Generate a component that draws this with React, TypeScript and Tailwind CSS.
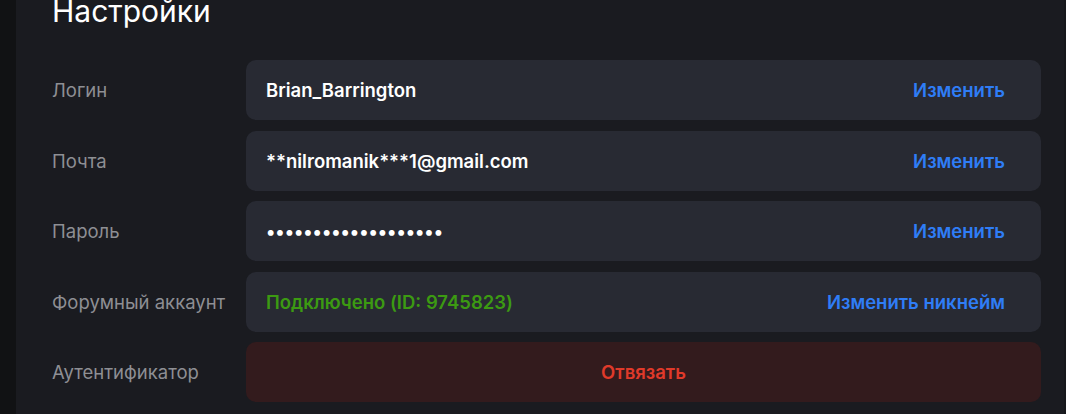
import React from "react";

type Row = {
  label: string;
  value: string;
  valueClass?: string;
  action: string;
};

const rows: Row[] = [
  { label: "Логин", value: "Brian_Barrington", action: "Изменить" },
  { label: "Почта", value: "**nilromanik***1@gmail.com", action: "Изменить" },
  { label: "Пароль", value: "•••••••••••••••••••", action: "Изменить" },
  {
    label: "Форумный аккаунт",
    value: "Подключено (ID: 9745823)",
    valueClass: "text-[#3c9a12]",
    action: "Изменить никнейм",
  },
];

const App = () => {
  return (
    <div
      className="flex h-[414px] w-full overflow-hidden bg-[#111214]"
      style={{ fontFamily: "Inter, 'Noto Sans', sans-serif" }}
    >
      <div className="w-[16px] shrink-0 bg-[#111214]" />
      <div className="flex-1 bg-[#1a1b20] pl-[36px] pr-[23px] border-r-2 border-[#16171b]">
        <h1 className="mt-[-7px] text-[30px] leading-[36px] font-normal text-white">
          Настройки
        </h1>

        <div className="mt-[31px] flex flex-col gap-[10.5px]">
          {rows.map((row) => (
            <div key={row.label} className="flex items-center">
              <div className="w-[194px] shrink-0 pt-[2px] text-[18.5px] text-[#8e8f94]">
                {row.label}
              </div>
              <div className="flex h-[60px] flex-1 items-center justify-between rounded-[10px] bg-[#282a33] pl-[20px] pr-[36px] pt-[2px]">
                <span
                  className={
                    "text-[18.5px] font-semibold " + (row.valueClass ?? "text-white")
                  }
                >
                  {row.value}
                </span>
                <button className="text-[18.5px] font-semibold text-[#2f7df6]">
                  {row.action}
                </button>
              </div>
            </div>
          ))}

          <div className="flex items-center">
            <div className="w-[194px] shrink-0 pt-[2px] text-[18.5px] text-[#8e8f94]">
              Аутентификатор
            </div>
            <button className="flex h-[60px] flex-1 items-center justify-center rounded-[10px] bg-[#331b1d] pt-[2px] text-[18.5px] font-semibold text-[#e03a2a]">
              Отвязать
            </button>
          </div>
        </div>
      </div>
    </div>
  );
};

export default App;
